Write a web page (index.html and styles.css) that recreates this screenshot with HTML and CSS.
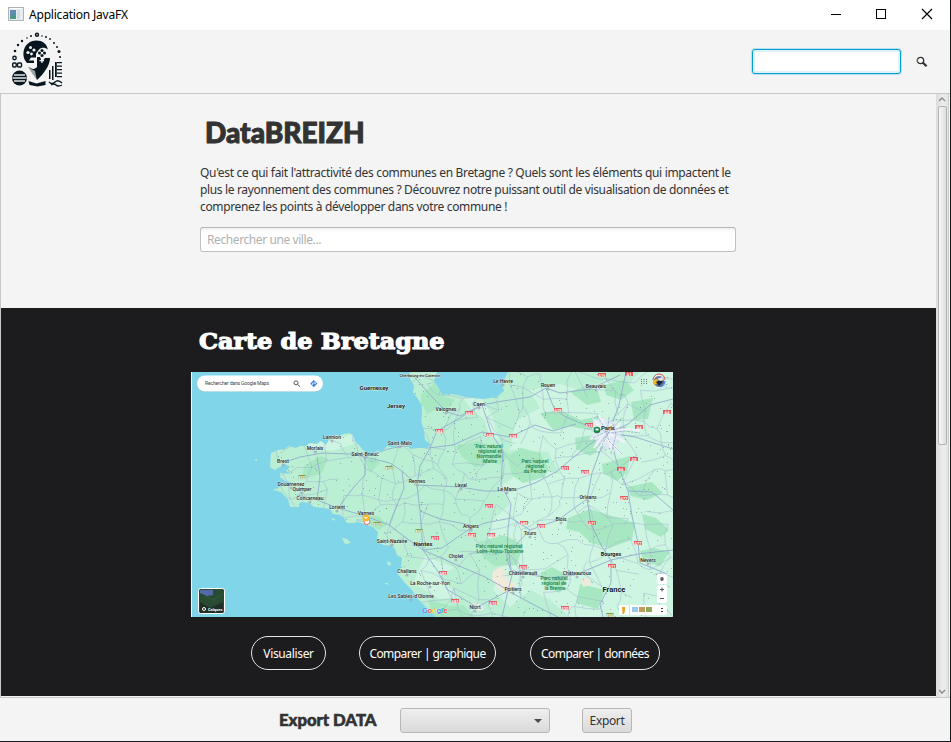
FILE: index.html
```html
<!DOCTYPE html>
<html lang="fr">
<head>
<meta charset="utf-8">
<title>Application JavaFX</title>
<link rel="stylesheet" href="styles.css">
</head>
<body>
<div class="window">
  <div class="titlebar">
    <svg class="app-icon" width="16" height="14" viewBox="0 0 16 14"><rect x=".5" y=".5" width="15" height="13" fill="#e8ecef" stroke="#aeb3b8"/><rect x="2" y="3" width="6" height="9" fill="#4a978b"/><path d="M2 3h6v3L2 10z" fill="#5f8db2"/><rect x="9" y="3" width="3" height="9" fill="#cfe0e4"/><path d="M2 1.5h12" stroke="#fff"/></svg>
    <span class="app-title">Application JavaFX</span>
    <svg class="controls" width="114" height="30" viewBox="0 0 114 30" fill="none" stroke="#000" shape-rendering="crispEdges"><path d="M5 14.5h10"/><rect x="50.500" y="9.500" width="9" height="9"/><path d="M96 9l10 10M106 9L96 19" shape-rendering="auto" stroke-width="1.200"/></svg>
  </div>
  <header class="header">
    <svg class="logo" width="54" height="58" viewBox="10 31 54 58" fill="#08171f">
      <g><circle cx="37" cy="34.700" r="2.200"/><circle cx="37" cy="34.700" r=".7" fill="#f4f4f4"/><circle cx="31" cy="36" r="1"/><circle cx="27" cy="38" r=".8"/><circle cx="22" cy="41" r="1.200"/><circle cx="18" cy="45" r="1.200"/><circle cx="15" cy="51" r="1.300"/><circle cx="42" cy="36" r=".8"/><circle cx="46" cy="37" r="1"/><circle cx="50" cy="39" r=".9"/><circle cx="54" cy="43" r="1"/><circle cx="57" cy="47" r="1"/><circle cx="59" cy="51.500" r="1.500"/><circle cx="60" cy="57" r="1"/></g>
      <path d="M27 63c-3-3-4-7-3.500-11 1-7 6-11.500 13-11.500 6 0 10 3 11.500 9-3-2.500-7-2.500-9 0l-3 4v4h-5l-2 3h5v2.500z"/>
      <path d="M37 57h3l2 5 3-4h5c0 6-4 12-8 17l-5 5c-2-5-5-8-8-13 4 3 6 2 8 0z"/>
      <path d="M28 67l7 4 1.500 8-4-5z" fill="#9aa3a7"/>
      <g fill="#f4f4f4"><circle cx="28" cy="52.500" r="1.600"/><circle cx="30.500" cy="47.500" r="1.500"/><circle cx="34" cy="50" r="1.600"/><circle cx="31.500" cy="54" r="1.400"/><path d="M41.300 58h1.200v5h-1.200zM39.500 60h4.500v1.200h-4.500z"/></g>
      <circle cx="42" cy="50.500" r="1.500"/><circle cx="39.500" cy="53" r="1.500"/><circle cx="44.500" cy="53" r="1.500"/><circle cx="42" cy="55.500" r="1.500"/>
      <g fill="none" stroke="#08171f" stroke-width="1.400"><circle cx="14.500" cy="58" r="1.700"/><rect x="12.700" y="63" width="3.500" height="4" rx="1"/><rect x="17.500" y="63" width="4" height="4" rx="1"/></g>
      <circle cx="19.500" cy="78" r="7.500"/><path d="M14 75h11M12.500 78h14M14 81h11" stroke="#e2e5e6" stroke-width="1.300"/>
      <path d="M28.500 81l8 2.500 9-2.500v4l-8 1.500-8-1.500z"/>
      <path d="M49 70h1.500v9H49zM52 66h1.500v14H52zM55 62h1.800v15H55zM57 62h5v1.300h-5zM57 65.500h5v1.300h-5zM57 69h5v1.300h-5zM57 72.500h5v1.300h-5zM57 76h5v1.300h-5z"/>
      <path d="M49 82q3 3 6 0t7 1M51 85q3-2 5 0t6 0" fill="none" stroke="#08171f" stroke-width="1.300"/>
    </svg>
    <div class="header-search">
      <input class="field field-focus" type="text" aria-label="Recherche">
      <svg width="14" height="14" viewBox="0 0 14 14"><circle cx="4.500" cy="4.500" r="3.200" fill="#fbfcff" stroke="#333" stroke-width="1.300"/><path d="M6.700 6.500l3.900 3.800" stroke="#333" stroke-width="2.200"/><path d="M1 3v3" stroke="#d79b5d" stroke-width=".8"/></svg>
    </div>
  </header>
  <main class="scroller">
    <div class="content">
      <section class="intro">
        <h1 class="brand"><span>DataBREIZH</span></h1>
        <p class="lead"><span class="l1">Qu'est ce qui fait l'attractivité des communes en Bretagne ? Quels sont les éléments qui impactent le</span><br><span class="l2">plus le rayonnement des communes ? Découvrez notre puissant outil de visualisation de données et</span><br><span class="l3">comprenez les points à développer dans votre commune !</span></p>
        <input class="field city" type="text" placeholder="Rechercher une ville...">
      </section>
      <section class="map-section">
        <h2 class="map-title"><span>Carte de Bretagne</span></h2>
        <svg class="map" width="482" height="245" viewBox="191 372 482 245">
          <defs>
            <path id="coast" d="M410 372L410 379L414 386L413 392L418 399L421 404L422 412L421 421L424 430L425 440L431 445L426 448L418 448L410 449L408 446L400 443L394 448L387 446L382 452L377 450L374 455L367 454L363 450L359 445L355 442L353 436L350 433L343 434L340 436L335 435L329 440L326 445L321 441L317 444L309 443L307 446L300 446L296 448L289 446L285 449L278 450L271 453L270 467L275 470L285 464L290 467L286 471L291 474L280 473L280 477L285 481L291 482L289 485L282 486L273 490L281 492L288 499L290 507L299 507L300 502L309 503L314 507L323 508L330 509L333 514L340 515L344 518L347 523L353 523L358 522L364 524L373 527L378 532L377 540L383 545L392 546L395 549L397 555L402 558L401 567L397 573L404 582L412 590L417 598L428 609L436 617H673V372H508L505 378L502 385L504 391L497 397L483 399L466 397L452 394L442 395L438 387L434 382L437 372Z"/>
            <clipPath id="land"><use href="#coast"/></clipPath>
          </defs>
          <rect x="191" y="372" width="482" height="245" fill="#81d5e9"/>
          <use href="#coast" fill="#bbefd4"/>
          <g clip-path="url(#land)">
            <path fill="#cef5e2" d="M673 372V617H570L550 600L530 590L510 607L493 590L505 560L485 548L493 520L510 504L500 486L530 467L560 474L548 452L510 450L516 421L540 408L530 390L560 384L582 391L605 380L625 388L640 372ZM463 398L482 399L493 417L499 440L490 437L484 419L472 410ZM307 444L355 434L357 443L332 451L305 448ZM425 556L455 568L438 575L460 598L440 599L413 583Z"/>
            <g fill="#a7e8c2">
              <path d="M421 394L435 383L442 395L455 400L447 410L437 409L427 414L421 402ZM456 446L477 441L499 447L510 455L500 465L490 462L476 468L462 457ZM507 456L521 448L540 453L548 468L545 477L523 483L512 475ZM570 392L585 386L598 391L601 402L587 405ZM604 385L625 380L634 390L621 400L606 395ZM540 413L560 410L581 420L600 416L590 430L568 426L553 430ZM575 438L593 435L604 447L590 456L576 449ZM602 464L630 456L627 473L617 481L603 473ZM631 402L653 398L648 419L634 420ZM627 487L652 482L663 493L647 500L631 496Z"/>
              <path d="M568 518L590 509L609 515L635 523L632 540L609 548L591 543L579 532L566 529ZM479 542L504 535L523 545L517 565L494 566L482 556ZM540 573L552 567L568 576L560 593L546 587ZM304 466L320 456L328 459L321 474L302 479ZM365 515L379 516L387 525L379 530L369 524ZM428 599L450 606L463 605L475 617H433ZM640 551L654 548L670 552L660 566L644 562ZM642 514L656 518L669 530L661 537L645 529ZM580 584L605 590L598 609L576 603ZM365 462L373 456L380 463L370 473Z"/>
            </g>
            <path fill="#f0eadb" d="M493 571L502 566L507 579L516 584L510 594L499 589L492 580ZM582 580l7-3 2 8-8 2zM470 603l12 1 2 6-8 1z"/>
            <g id="texture"></g>
            <g fill="none" stroke="#91a9ce" stroke-width="1" opacity=".85">
              <path d="M282 463L300 457L323 453L350 454L365 457L390 463L402 471L417 485L440 486L460 487L485 491L512 491L535 483L556 472L569 461L590 444L609 433"/>
              <path d="M297 495L317 500L338 508L365 516L389 525L413 543L423 550L442 548L468 530L485 523L511 518L530 530L558 520L587 499L592 473L600 451L609 433L628 424L650 405L673 399"/>
              <path d="M412 374L424 388L434 399L447 412L460 416L482 405L503 401L530 397L546 388L560 393L590 389L620 375"/>
              <path d="M482 405L451 423L437 431L430 448L420 466L417 485L420 511L423 550L437 570L448 590L477 607L508 591L542 609L558 617"/>
              <path d="M482 405L492 435L503 451L501 485L511 504L508 529L507 558L512 575L508 591L502 617"/>
              <path d="M546 388L554 408L564 416L578 422L594 428L609 433L617 463L628 491L632 516L638 543L640 563L667 574"/>
              <path d="M587 499L591 524L602 547L611 560L611 583L600 604L603 617M530 530L509 552L511 570L526 574L549 578L575 575L611 560L638 554L673 550M423 550L457 565L485 577L508 590M402 471L404 488L389 525M317 500L320 477L317 457"/>
              <path d="M365 457L388 449L403 446L428 448L453 445L482 432L510 437L535 425L553 431L576 424M420 511L440 519L470 525M338 508L353 488L365 475L365 457M609 433L635 437L673 449M628 491L652 492L673 510M609 433L619 405L626 372"/>
            </g>
            <path fill="#dfe9f3" opacity=".8" d="M592 418l8 3 4-5 4 6 8-1 1 6 7 2-4 5 4 6-7 1 1 7-7-2-4 5-5-6-7 2 1-7-6-3 5-5z"/>
            <g fill="none" stroke="#eef2f8" stroke-width="2"><path d="M595 420l10 11 4 9 12 14M592 427l18 4 20-2 10 2M603 419l1 15-10 14M611 424l-2 18 4 10M590 439l17-6 17 8M599 415l14 36M620 423l-23 28M594 423l31 20"/></g>
            <path fill="none" stroke="#8395c2" stroke-width=".6" stroke-dasharray="3 1" d="M592 427l18 6 14-2 16 2M597 416l8 12 4 13 13 13M609 417l-2 17-9 12M593 438l15-7 18-4M600 449l9-17 13-14M613 424l3 11-5 19"/>
          </g>
          <g fill="#bbefd4"><path d="M342 538l5 1 4 4-6 1zM331 518l4 1-1 2zM254 460l3-1v2zM388 561l3 2-1 3-3-2zM384 583l4 0 0 2zM371 389l8-1-2 3zM396 407l7-1-3 3z"/></g>
          <g id="shields"></g>
          <g id="labels"></g>
          <g class="park" text-anchor="middle"><text x="489" y="448">Parc naturel</text><text x="490" y="453">régional et</text><text x="489" y="458">Normandie</text><text x="490" y="463">Maine</text><text x="535" y="463">Parc naturel</text><text x="535" y="468">régional</text><text x="535" y="473">du Perche</text><text x="499" y="548">Parc naturel régional</text><text x="500" y="553">Loire-Anjou-Touraine</text><text x="554" y="580">Parc naturel</text><text x="554" y="585">régional de</text><text x="555" y="590">la Brenne</text></g>
          <circle cx="597" cy="430" r="3.300" fill="#168447"/><rect x="595.500" y="428.500" width="3" height="2" fill="#fff"/>
          <circle cx="367" cy="521.500" r="3" fill="#fff" stroke="#ef617a"/><circle cx="366" cy="518" r="3.400" fill="#fbb82e"/><path d="M364 517h4l-2 2z" fill="#fff"/>
          <rect x="197" y="376" width="126" height="16" rx="8" fill="#6aaebe" opacity=".5"/><rect x="197" y="375.500" width="126" height="16" rx="8" fill="#fff"/>
          <text class="search-label" x="205" y="385.300" textLength="64">Rechercher dans Google Maps</text>
          <circle cx="296" cy="382.800" r="2" fill="none" stroke="#555"/><path d="M297.500 384.500l2.500 2" stroke="#555"/><path d="M313.800 380l3.500 3.600-3.500 3.600-3.500-3.600z" fill="#3b7de9"/><path d="M312.500 385v-2h3M314.500 381.800l1.200 1.200-1.200 1.200" fill="none" stroke="#fff" stroke-width=".7"/>
          <path d="M641 379.500h6M641 381.500h6M641 383.500h6" stroke="#647b70" stroke-dasharray="1 1.500"/>
          <circle cx="659" cy="381.500" r="6" fill="#677496" stroke="#fff"/><path d="M654 385a6 6 0 0 1-1-5l4-1 2 4z" fill="#efb829"/><path d="M656 382l4-2 3 2-4 4z" fill="#20283a"/><path d="M657 379l5-2 2 3-4 1z" fill="#dfe3ea"/><path d="M653 380a6 6 0 0 1 12 0" fill="none" stroke="#e34b3d" stroke-width="1"/><path d="M665 381a6 6 0 0 1-5 6" fill="none" stroke="#4285f4" stroke-width="1.200"/>
          <rect x="198.500" y="588.500" width="26" height="25" rx="2" fill="#284b32" stroke="#fff"/><path d="M200 590h13v5l-6 1-7-3z" fill="#5369aa"/><path d="M200 602l10 6 13-6v11h-23z" fill="#202e28"/><path d="M205 596l8 4 8-5" stroke="#365a3b" fill="none"/><circle cx="204" cy="609" r="1.500" fill="none" stroke="#fff"/><text x="208" y="610.800" class="calques">Calques</text>
          <text class="google" x="422" y="613"><tspan fill="#4285f4">G</tspan><tspan fill="#ea4335">o</tspan><tspan fill="#fbbc05">o</tspan><tspan fill="#4285f4">g</tspan><tspan fill="#34a853">l</tspan><tspan fill="#ea4335">e</tspan></text>
          <g fill="#fff"><rect x="657" y="574" width="10" height="10" rx="2"/><rect x="657" y="585" width="10" height="18" rx="2"/><rect x="619" y="605" width="48" height="10" rx="2"/></g>
          <path d="M660 589.500h4M662 587.500v4M660 598.500h4" stroke="#555"/><circle cx="662" cy="579" r="1.900" fill="#777"/><path d="M662.500 577.500l-1 3" stroke="#333" stroke-width=".8"/><path d="M629.500 605v10" stroke="#ddd"/><path d="M622 607h3v4l-1 3h-1.500z" fill="#e9a332"/><rect x="632" y="607" width="6" height="5" fill="#9ac9ee"/><rect x="639" y="607" width="6" height="5" fill="#c19d5c"/><rect x="646" y="607" width="6" height="5" fill="#8fa75a"/><path d="M661 609l1-1 1 1M661 611l1 1 1-1" fill="none" stroke="#444"/>
          <path d="M191.500 372v245" stroke="#effcff"/>
        </svg>
        <div class="actions"><button class="pill p1">Visualiser</button><button class="pill p2">Comparer | graphique</button><button class="pill p3">Comparer | données</button></div>
      </section>
    </div>
    <div class="scrollbar"><svg width="8" height="12" viewBox="0 0 8 12"><path d="M1 7l3-3 3 3" fill="none" stroke="#888" stroke-width="1.300"/></svg><div class="thumb"></div><svg class="down" width="8" height="12" viewBox="0 0 8 12"><path d="M1 5l3 3 3-3" fill="none" stroke="#888" stroke-width="1.300"/></svg></div>
  </main>
  <footer class="footer"><strong class="export-title"><span>Export DATA</span></strong><div class="combo"><svg width="8" height="4" viewBox="0 0 8 4"><path d="M0 0h8L4 4z" fill="#4b4b4b"/></svg></div><button class="export">Export</button></footer>
</div>
<script src="map.js"></script>
</body>
</html>
```

FILE: styles.css
```css
* { box-sizing: border-box; }
body { margin: 0; background: #fff; overflow: hidden; color: #333; font: 12px/17px "Noto Sans", "Open Sans", sans-serif; }
button, input { font: inherit; }
.window { width: 951px; height: 742px; display: flex; flex-direction: column; background: #f4f4f4; border-right: 1px solid #16181c; border-bottom: 1px solid #16181c; }
.titlebar { height: 30px; flex: none; display: flex; align-items: center; background: #fff; padding: 0 10px 0 8px; color: #000; }
.app-icon { margin-top: -2px; }
.app-title { margin: -2px 0 0 5px; font-size: 12px; letter-spacing: -.2px; }
.controls { margin-left: auto; }
.header { height: 63px; flex: none; display: flex; justify-content: space-between; padding: 1px 20px 0 10px; }
.header-search { display: flex; align-items: flex-start; gap: 14px; padding-top: 18px; }
.header-search svg { margin-top: 7px; }
.field { display: block; height: 25px; border: 1px solid #c1c1c1; border-top-color: #b4b4b4; border-radius: 3px; background: linear-gradient(#f0f0f0, #fff 4px); padding: 0 6px; outline: none; color: #333; }
.field-focus { width: 149px; margin-right: 1px; border-color: #039ed3; box-shadow: 0 0 0 1px #b8e2f0, inset 0 0 0 2px #e1f1f6; background: #fff; }
.field::placeholder { color: #b0b0b0; opacity: 1; letter-spacing: -.41px; }
.scroller { height: 605px; flex: none; display: flex; border: 1px solid #c8c8c8; border-right: 0; padding-bottom: 1px; background: #f4f4f4; }
.content { width: 935px; height: 602px; overflow: hidden; }
.intro { height: 214px; padding: 19px 0 0 199px; }
h1, h2, p { margin: 0; }
.brand { height: 38px; padding-left: 5px; font: 900 28px/38px Lato, sans-serif; }
.brand span, .export-title span, .map-title span { display: inline-block; transform-origin: left center; white-space: nowrap; }
.brand span { transform: scaleX(1); -webkit-text-stroke: 1px #333; }
.lead { margin-top: 13px; white-space: nowrap; }
.l1 { letter-spacing: -.325px; }
.l2 { letter-spacing: -.348px; }
.l3 { letter-spacing: -.345px; }
.city { width: 536px; margin-top: 12px; }
.map-section { height: 388px; background: #1c1c1e; color: #fff; }
.map-title { height: 64px; padding: 15px 0 0 198px; font: bold 23px/36px "DejaVu Serif", serif; }
.map-title span { transform: scaleX(1.038); -webkit-text-stroke: 1.2px #fff; }
.map { display: block; margin-left: 190px; }
.actions { display: flex; margin: 19px 0 0 250px; }
.pill { height: 34px; border: 1px solid #e5e5e5; border-radius: 17px; padding: 1px 0 0; background: #1c1c1e; color: #fff; letter-spacing: -.35px; white-space: nowrap; }
.p1 { width: 75px; }
.p2 { width: 137px; margin-left: 33px; letter-spacing: -.58px; }
.p3 { width: 130px; margin-left: 34px; letter-spacing: -.58px; }
.scrollbar { width: 13px; height: 603px; display: flex; flex-direction: column; align-items: center; background: linear-gradient(90deg, #dcdcdc, #ededed 60%, #e3e3e3); border-right: 1px solid #cecece; }
.scrollbar svg { flex: none; }
.thumb { width: 9px; height: 339px; border: 1px solid #b2b2b2; border-radius: 2px; background: linear-gradient(90deg, #f8f8f8, #dedede); }
.down { margin-top: auto; }
.footer { height: 43px; flex: none; display: flex; padding: 10px 0 0 279px; }
.export-title { width: 121px; font: 900 17px/24px Lato, sans-serif; white-space: nowrap; }
.export-title span { transform: scaleX(.98); -webkit-text-stroke: .6px #333; }
.combo, .export { height: 25px; border: 1px solid #b7b7b7; border-radius: 3px; background: linear-gradient(#efefef, #dadada); color: #333; }
.combo { width: 150px; display: flex; align-items: center; justify-content: flex-end; padding-right: 7px; }
.export { width: 50px; margin-left: 32px; padding: 0; letter-spacing: -.35px; }
.map text { font-family: Roboto, sans-serif; font-size: 5px; fill: #15191b; paint-order: stroke; stroke: #e8faf0; stroke-width: .6px; }
.map .park text { fill: #168044; font-size: 5px; font-weight: 500; stroke: none; }
.map .search-label { font-size: 5px; fill: #444; stroke: none; }
.map .google { font-size: 8px; font-weight: 500; }
.map .google tspan { stroke: #fff; stroke-width: .5px; }
.map .calques { font-size: 4px; fill: #fff; stroke: none; font-weight: bold; }
.map .shield { font-size: 4px; fill: #fff; stroke: none; font-weight: bold; }
```

FILE: map.js
```js
const NS = "http://www.w3.org/2000/svg";
function add(parent, tag, attrs, text) {
  const el = document.createElementNS(NS, tag);
  for (const key in attrs) el.setAttribute(key, attrs[key]);
  if (text) el.textContent = text;
  parent.appendChild(el);
}
let seed = 73;
function random() { seed = (seed * 16807) % 2147483647; return seed / 2147483647; }

// Minor roads join neighbouring points of a jittered grid.
const texture = document.getElementById("texture");
const nodes = [];
for (let r = 0; r < 16; r++) {
  nodes.push([]);
  for (let c = 0; c < 26; c++) nodes[r].push([265 + c * 17 + random() * 17, 366 + r * 17 + random() * 17]);
}
let minor = "", dots = "";
for (let r = 0; r < 15; r++) for (let c = 0; c < 25; c++) {
  const a = nodes[r][c];
  for (const b of [nodes[r][c + 1], nodes[r + 1][c]]) {
    if (random() < .28) continue;
    const mx = (a[0] + b[0]) / 2 + random() * 4 - 2, my = (a[1] + b[1]) / 2 + random() * 4 - 2;
    minor += `M${a[0].toFixed(1)} ${a[1].toFixed(1)}L${mx.toFixed(1)} ${my.toFixed(1)}L${b[0].toFixed(1)} ${b[1].toFixed(1)}`;
  }
}
for (let i = 0; i < 700; i++) dots += `M${(268 + random() * 405).toFixed(0)} ${Math.floor(372 + random() * 245)}.5h1`;
add(texture, "path", { d: minor, fill: "none", stroke: "#a0b5d0", "stroke-width": .6, opacity: .85 });
add(texture, "path", { d: dots, fill: "none", stroke: "#58796d", "stroke-width": 1, opacity: .5 });

const shields = document.getElementById("shields");
[[469,413,"A84"],[439,431,"A84"],[490,435,"A88"],[513,436,"A28"],[558,410,"A28"],[589,425,"A13"],[602,375,"A16"],[629,374,"A1"],[667,412,"A4"],[639,427,"A4"],[634,459,"A5"],[565,468,"A11"],[585,472,"A10"],[621,469,"A6"],[489,506,"A11"],[624,498,"A77"],[524,523,"A85"],[541,526,"A10"],[592,523,"A71"],[435,538,"A11"],[472,535,"A87"],[491,535,"A85"],[638,543,"A77"],[443,573,"A83"],[523,567,"A10"],[612,566,"A71"],[455,601,"A83"],[493,603,"A10"],[565,608,"A20"]].forEach(([x, y, name]) => {
  add(shields, "rect", { x: x - 4, y: y - 2, width: 8, height: 4, fill: "#e25d62" });
  add(shields, "text", { x, y: y + 1.5, "text-anchor": "middle", class: "shield" }, name);
});
[[302,477],[389,468],[377,524],[419,531],[610,615]].forEach(([x, y]) => {
  add(shields, "rect", { x: x - 3.5, y: y - 2, width: 7, height: 4, fill: "#7b9f4c" });
  add(shields, "text", { x, y: y + 1.5, "text-anchor": "middle", class: "shield" }, "E50");
});

const labels = document.getElementById("labels");
[["Guernesey",374,389.5,6],["Jersey",396,407.5,6],["Cherbourg-en-Cotentin",420,376.5,4],["Valognes",446,411,5],["Caen",479,406,5],["Le Havre",503,383,5],["Rouen",548,387,5],["Beauvais",596,388,5],["Paris",608,430,6],["Lannion",332,439,5],["Morlaix",315,450,5],["Saint-Malo",400,445,5],["Saint-Brieuc",365,456,5],["Brest",283,463,5],["Douarnenez",291,486,5],["Quimper",302,491,5],["Concarneau",310,500,5],["Lorient",337,509,5],["Rennes",417,483,5],["Laval",461,487,5],["Le Mans",507,491,5],["Vannes",366,515,5],["Saint-Nazaire",392,543,5],["Nantes",423,546,6],["Angers",471,528,5],["Cholet",456,558,5],["Challans",407,573,5],["La Roche-sur-Yon",430,585,5],["Les Sables-d'Olonne",411,598,5],["Niort",475,609,5],["Orléans",588,499,5],["Blois",561,521,5],["Tours",530,535,5],["Bourges",611,556,5.5],["Nevers",648,562,5],["Châtellerault",523,575,5],["Châteauroux",577,575,5],["Poitiers",513,591,5],["France",614,592,7.5]].forEach(([name, x, y, size]) => {
  add(labels, "text", { x, y, "text-anchor": "middle", style: `font-size:${size}px;font-weight:${size > 5 ? 700 : 500}` }, name);
  if (size === 5) add(labels, "circle", { cx: x, cy: y + 2, r: 1, fill: "#fff", stroke: "#536078", "stroke-width": .5 });
});
```
